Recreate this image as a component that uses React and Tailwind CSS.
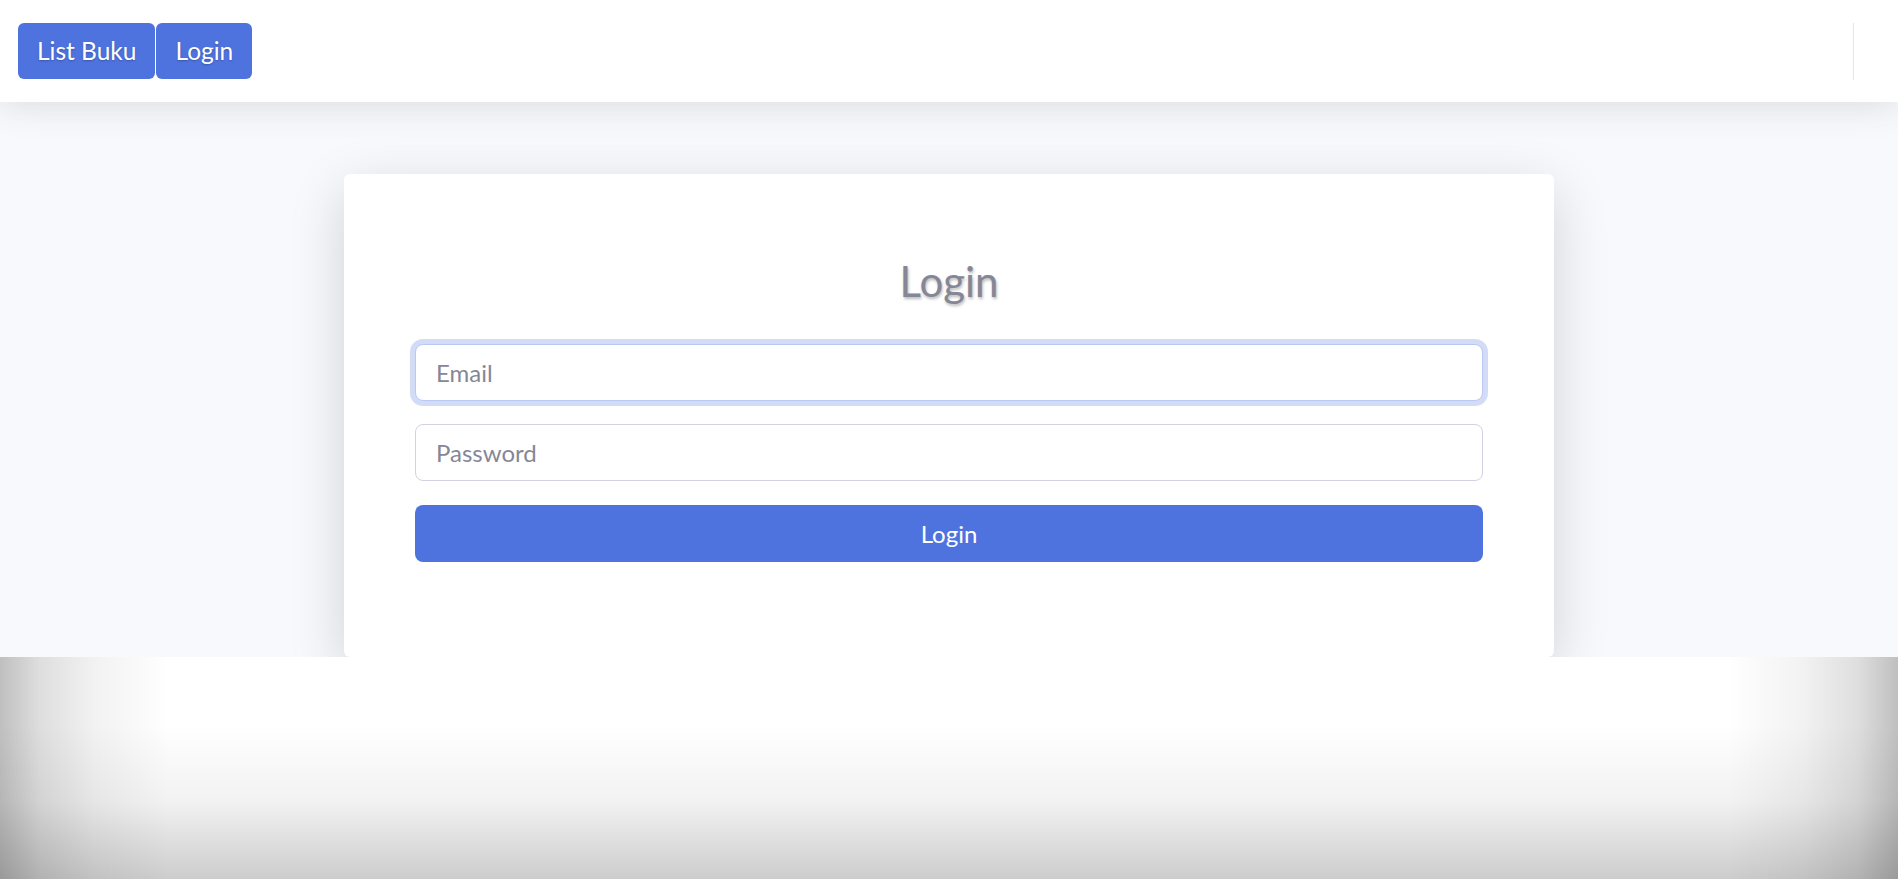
import { useState } from 'react';

const font = { fontFamily: 'Lato, "Noto Sans", "Open Sans", sans-serif' };

export default function App() {
  const [email, setEmail] = useState('');
  const [password, setPassword] = useState('');

  return (
    <div className="flex h-screen flex-col bg-white" style={font}>
      {/* Topbar */}
      <nav className="relative z-10 flex h-[102px] shrink-0 items-center justify-between bg-white pl-[18px] pr-[44px] shadow-[0_4px_35px_rgba(58,59,69,0.15)]">
        <div className="flex items-center gap-px">
          <a href="#" className="flex h-[56px] items-center rounded-[6px] bg-[#4e73df] px-[19px] text-[24.5px] text-white [text-shadow:0_1px_2px_rgba(0,0,0,0.25)]">
            List Buku
          </a>
          <a href="#" className="flex h-[56px] items-center rounded-[6px] bg-[#4e73df] px-[19px] text-[24.5px] text-white [text-shadow:0_1px_2px_rgba(0,0,0,0.25)]">
            Login
          </a>
        </div>
        <div className="h-[57px] w-px bg-[#e3e6f0]"></div>
      </nav>

      {/* Konten */}
      <main className="shrink-0 bg-[#f8f9fc] pt-[72px]">
        <div className="mx-auto w-[1210px] rounded-[6px] bg-white px-[71px] pb-[95px] pt-[82px] shadow-[0_16px_56px_rgba(0,0,0,0.16)]">
          <h2 className="mb-[38px] text-center text-[42px] leading-[50px] text-[#858796] [text-shadow:1px_2px_3px_rgba(0,0,0,0.28)]">
            Login
          </h2>
          <form onSubmit={(e) => e.preventDefault()}>
            <input
              type="email"
              placeholder="Email"
              value={email}
              onChange={(e) => setEmail(e.target.value)}
              className="block h-[57px] w-full rounded-[8px] border border-[#bac8f3] bg-white px-5 text-[24px] text-[#6e707e] outline-none shadow-[0_0_0_5px_rgba(78,115,223,0.25)] placeholder:text-[#858796]"
            />
            <input
              type="password"
              placeholder="Password"
              value={password}
              onChange={(e) => setPassword(e.target.value)}
              className="mt-[23px] block h-[57px] w-full rounded-[8px] border border-[#d1d3e2] bg-white px-5 text-[24px] text-[#6e707e] outline-none placeholder:text-[#858796]"
            />
            <button
              type="submit"
              className="mt-[24px] block h-[57px] w-full rounded-[8px] bg-[#4e73df] text-[24px] text-white"
            >
              Login
            </button>
          </form>
        </div>
      </main>

      {/* Area bawah */}
      <div className="flex-1 bg-white bg-[linear-gradient(to_right,rgba(0,0,0,0.25),rgba(0,0,0,0.13)_40px,rgba(0,0,0,0.05)_95px,rgba(0,0,0,0)_170px,rgba(0,0,0,0)_calc(100%-170px),rgba(0,0,0,0.05)_calc(100%-95px),rgba(0,0,0,0.13)_calc(100%-40px),rgba(0,0,0,0.25)),linear-gradient(to_bottom,rgba(0,0,0,0)_30%,rgba(0,0,0,0.05)_65%,rgba(0,0,0,0.2))]"></div>
    </div>
  );
}
